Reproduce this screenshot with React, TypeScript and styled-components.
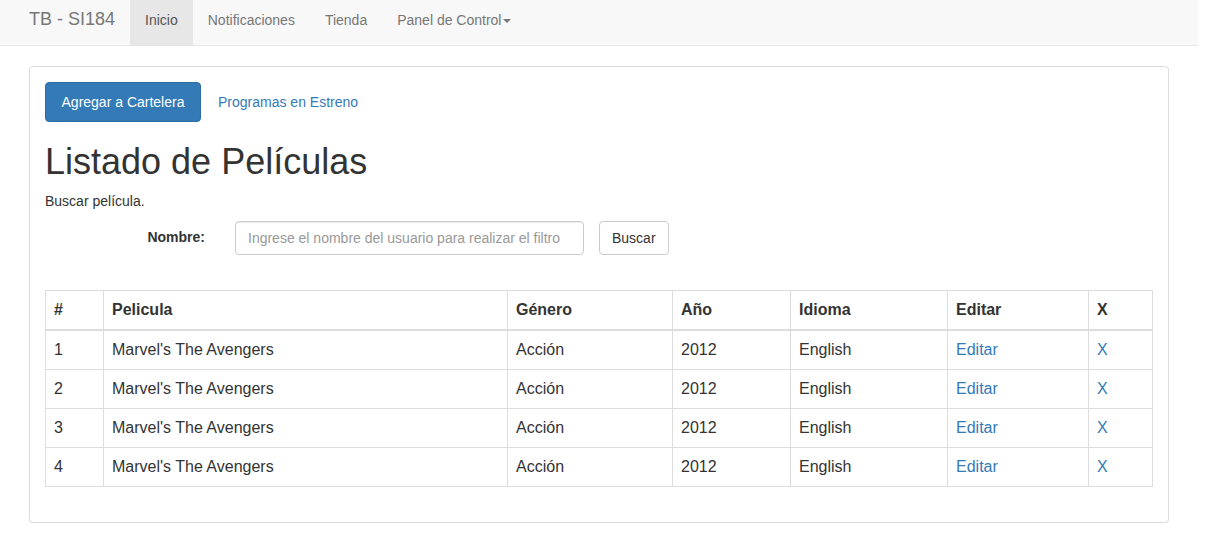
import React from "react";
import styled, { createGlobalStyle } from "styled-components";

const GlobalStyle = createGlobalStyle`
  html, body { margin: 0; padding: 0; background: #fff; }
  body {
    font-family: "Liberation Sans", Arial, Helvetica, sans-serif;
    font-size: 14px;
    line-height: 1.42857;
    color: #333;
  }
  * { box-sizing: border-box; }
`;

const Page = styled.div`
  width: 1198px;
`;

const Navbar = styled.nav`
  height: 46px;
  background: #f8f8f8;
  border-bottom: 1px solid #e7e7e7;
  margin-bottom: 20px;
`;

const NavContainer = styled.div`
  width: 1170px;
  margin: 0 auto;
  display: flex;
  align-items: stretch;
  height: 45px;
`;

const Brand = styled.a`
  padding: 9px 15px 0 15px;
  font-size: 18px;
  line-height: 20px;
  color: #777;
  text-decoration: none;
`;

const NavLink = styled.a<{ $active?: boolean }>`
  padding: 10px 15px 0 15px;
  line-height: 20px;
  color: ${(p) => (p.$active ? "#555" : "#777")};
  background: ${(p) => (p.$active ? "#e7e7e7" : "transparent")};
  text-decoration: none;
  display: flex;
  align-items: flex-start;
`;

const Caret = styled.span`
  display: inline-block;
  width: 0;
  height: 0;
  margin-left: 2px;
  margin-top: 9px;
  border-top: 4px solid #777;
  border-left: 4px solid transparent;
  border-right: 4px solid transparent;
`;

const Container = styled.div`
  width: 1170px;
  margin: 0 auto;
  padding: 0 15px;
`;

const Panel = styled.div`
  border: 1px solid #ddd;
  border-radius: 4px;
  box-shadow: 0 1px 1px rgba(0, 0, 0, 0.05);
  background: #fff;
`;

const PanelBody = styled.div`
  padding: 15px;
`;

const Actions = styled.div`
  display: flex;
  align-items: center;
`;

const PrimaryButton = styled.button`
  height: 40px;
  padding: 0 15px;
  background: #337ab7;
  border: 1px solid #2e6da4;
  border-radius: 4px;
  color: #fff;
  font-family: inherit;
  font-size: 14px;
  width: 156px;
`;

const LinkButton = styled.a`
  color: #337ab7;
  text-decoration: none;
  padding: 2px 17px 0;
  font-size: 14px;
`;

const Title = styled.h1`
  font-size: 36px;
  font-weight: 500;
  line-height: 1.1;
  margin: 20px 0 10px;
`;

const Hint = styled.p`
  margin: 0 0 9px;
`;

const FormRow = styled.div`
  display: flex;
  align-items: center;
  height: 34px;
`;

const Label = styled.label`
  width: 160px;
  text-align: right;
  font-weight: bold;
  padding-right: 0;
`;

const Input = styled.input`
  margin-left: 30px;
  width: 349px;
  height: 34px;
  padding: 6px 12px;
  border: 1px solid #ccc;
  border-radius: 4px;
  font-family: inherit;
  font-size: 14px;
  color: #555;
  box-shadow: inset 0 1px 1px rgba(0, 0, 0, 0.075);
  &::placeholder { color: #999; }
`;

const DefaultButton = styled.button`
  margin-left: 15px;
  height: 34px;
  padding: 6px 12px;
  border: 1px solid #ccc;
  border-radius: 4px;
  background: #fff;
  color: #333;
  font-family: inherit;
  font-size: 14px;
`;

const Table = styled.table`
  margin-top: 35px;
  margin-bottom: 20px;
  width: 100%;
  border-collapse: collapse;
  border: 1px solid #ddd;
  font-size: 16px;
`;

const Th = styled.th<{ $w?: number }>`
  text-align: left;
  padding: 8px;
  line-height: 22px;
  border: 1px solid #ddd;
  border-bottom-width: 2px;
  font-weight: bold;
  width: ${(p) => (p.$w ? `${p.$w}px` : "auto")};
`;

const Td = styled.td`
  padding: 8px;
  line-height: 22px;
  border: 1px solid #ddd;
`;

const CellLink = styled.a`
  color: #337ab7;
  text-decoration: none;
`;

const columns = [
  { label: "#", w: 58 },
  { label: "Pelicula", w: 404 },
  { label: "Género", w: 165 },
  { label: "Año", w: 118 },
  { label: "Idioma", w: 157 },
  { label: "Editar", w: 141 },
  { label: "X", w: 64 },
];

const rows = [1, 2, 3, 4].map((n) => ({
  id: n,
  title: "Marvel's The Avengers",
  genre: "Acción",
  year: 2012,
  lang: "English",
}));

export default function App() {
  return (
    <Page>
      <GlobalStyle />
      <Navbar>
        <NavContainer>
          <Brand href="#">TB - SI184</Brand>
          <NavLink $active href="#">Inicio</NavLink>
          <NavLink href="#">Notificaciones</NavLink>
          <NavLink href="#">Tienda</NavLink>
          <NavLink href="#">
            Panel de Control<Caret />
          </NavLink>
        </NavContainer>
      </Navbar>
      <Container>
        <Panel>
          <PanelBody>
            <Actions>
              <PrimaryButton>Agregar a Cartelera</PrimaryButton>
              <LinkButton href="#">Programas en Estreno</LinkButton>
            </Actions>
            <Title>Listado de Películas</Title>
            <Hint>Buscar película.</Hint>
            <FormRow>
              <Label>Nombre:</Label>
              <Input placeholder="Ingrese el nombre del usuario para realizar el filtro" />
              <DefaultButton>Buscar</DefaultButton>
            </FormRow>
            <Table>
              <thead>
                <tr>
                  {columns.map((c) => (
                    <Th key={c.label} $w={c.w}>
                      {c.label}
                    </Th>
                  ))}
                </tr>
              </thead>
              <tbody>
                {rows.map((r) => (
                  <tr key={r.id}>
                    <Td>{r.id}</Td>
                    <Td>{r.title}</Td>
                    <Td>{r.genre}</Td>
                    <Td>{r.year}</Td>
                    <Td>{r.lang}</Td>
                    <Td>
                      <CellLink href="#">Editar</CellLink>
                    </Td>
                    <Td>
                      <CellLink href="#">X</CellLink>
                    </Td>
                  </tr>
                ))}
              </tbody>
            </Table>
          </PanelBody>
        </Panel>
      </Container>
    </Page>
  );
}
